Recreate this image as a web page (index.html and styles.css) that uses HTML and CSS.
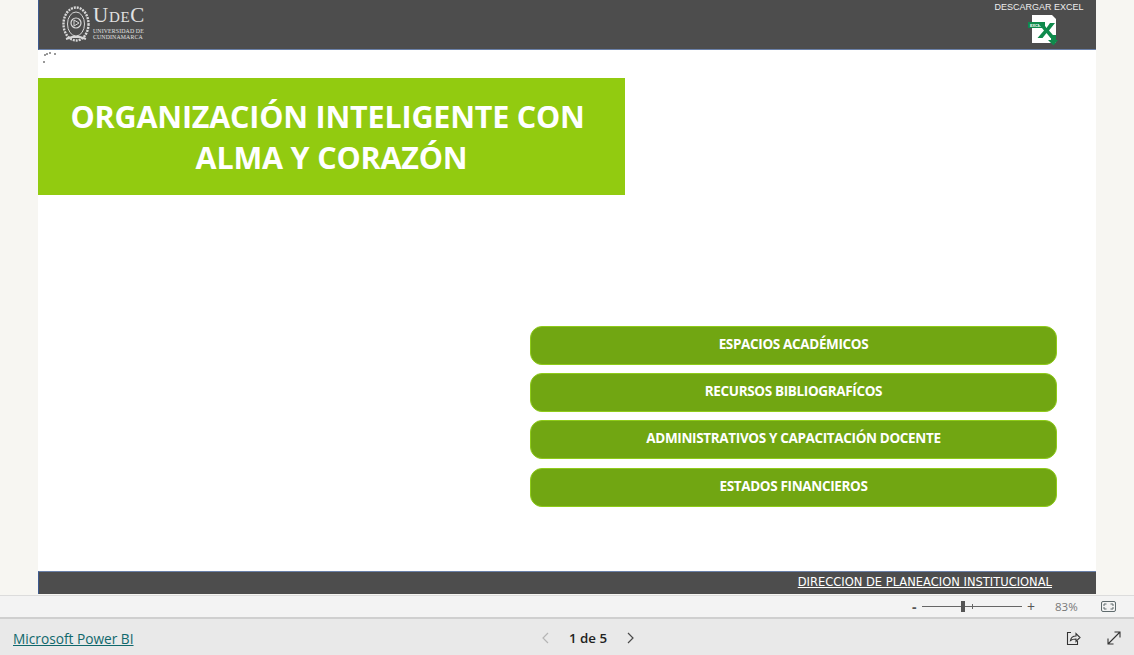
FILE: index.html
```html
<!DOCTYPE html>
<html lang="es">
<head>
<meta charset="utf-8">
<title>UDEC</title>
<link rel="stylesheet" href="styles.css">
</head>
<body>
<div class="stage">
  <main class="report">
    <header class="topbar">
      <div class="brand">
        <svg class="seal" width="28" height="38" viewBox="0 0 28 38" fill="none" stroke="#d8d8d8">
          <ellipse cx="14" cy="19" rx="12.5" ry="16.5" stroke-width="2.4" stroke-dasharray="2 1"/>
          <ellipse cx="14" cy="19" rx="8.5" ry="12" stroke-width="1"/>
          <circle cx="14" cy="18" r="5" stroke-width="1.2"/>
          <path d="M12 15l5 3-5 3z" stroke-width="1"/>
          <path d="M4 34l6-2h8l6 2" stroke-width="2"/>
        </svg>
        <div class="wordmark">
          <div class="udec"><span class="big">U</span>DE<span class="big">C</span></div>
          <div class="uni">UNIVERSIDAD DE</div>
          <div class="uni">CUNDINAMARCA</div>
        </div>
      </div>
      <div class="download">
        <div class="download-label">DESCARGAR EXCEL</div>
        <svg class="excel" width="30" height="31" viewBox="0 0 30 31">
          <path d="M4 0h20l4 4v24H4z" fill="#fff"/>
          <path d="M0 7h17v6H0z" fill="#0f8a4c"/>
          <text class="excel-tag" x="2" y="11.500">EXCEL</text>
          <path d="M10 8h5l3.500 5 3.500-5h5l-6 7.500 6.500 7.500h-5l-4-5-4 5h-5l6.500-7.500z" fill="#0f8a4c"/>
          <path d="M23 20h5v5h2l-4.500 5.500-5.500-5.500h3z" fill="#0f8a4c"/>
        </svg>
      </div>
    </header>
    <section class="content">
      <div class="spinner" aria-hidden="true">
        <i class="dot d1"></i><i class="dot d2"></i><i class="dot d3"></i><i class="dot d4"></i><i class="dot d5"></i>
      </div>
      <h1 class="banner"><span>ORGANIZACIÓN INTELIGENTE CON&nbsp;<br>ALMA Y CORAZÓN</span></h1>
      <nav class="menu">
        <a class="menu-btn">ESPACIOS ACADÉMICOS</a>
        <a class="menu-btn">RECURSOS BIBLIOGRAFÍCOS</a>
        <a class="menu-btn">ADMINISTRATIVOS Y CAPACITACIÓN DOCENTE</a>
        <a class="menu-btn">ESTADOS FINANCIEROS</a>
      </nav>
    </section>
    <footer class="report-foot"><a class="foot-link">DIRECCION DE PLANEACION INSTITUCIONAL</a></footer>
  </main>
</div>
<div class="zoombar">
  <span class="zoom-sign minus">-</span>
  <div class="slider"><span class="tick"></span><span class="thumb"></span></div>
  <span class="zoom-sign plus">+</span>
  <span class="pct">83%</span>
  <svg class="fit" width="15" height="11" viewBox="0 0 15 11" fill="none">
    <rect x="0.5" y="0.500" width="14" height="10" rx="1.500" stroke="#5f6b6d"/>
    <path d="M3 5V3h2.500M12 5V3H9.500M3 6v2h2.500M12 6v2H9.500" stroke="#5f6b6d"/>
  </svg>
</div>
<div class="bottombar">
  <a class="pbi">Microsoft Power BI</a>
  <div class="pager">
    <svg width="9" height="12" viewBox="0 0 9 12" fill="none"><path d="M7 1L2 6l5 5" stroke="#b5b5b5" stroke-width="1.200"/></svg>
    <span class="page-text">1 de 5</span>
    <svg width="9" height="12" viewBox="0 0 9 12" fill="none"><path d="M2 1l5 5-5 5" stroke="#4a4a4a" stroke-width="1.200"/></svg>
  </div>
  <div class="actions">
    <svg width="15" height="15" viewBox="0 0 15 15" fill="none" stroke="#333" stroke-width="1.100">
      <path d="M5 1.500H1.500v12h10V10"/>
      <path d="M4.500 9.500c.5-3 3-4.500 5.500-4.500V2.500l4 4-4 4V8c-2 0-4 .3-5.500 1.500z"/>
    </svg>
    <svg width="14" height="14" viewBox="0 0 14 14" fill="none" stroke="#333" stroke-width="1.100">
      <path d="M1 13L13 1M7.500 1H13v5.500M1 7.500V13h5.500"/>
    </svg>
  </div>
</div>
</body>
</html>
```
FILE: styles.css
```css
* { box-sizing: border-box; }
html, body { margin: 0; height: 100%; overflow: hidden; }
body {
  width: 1134px;
  height: 655px;
  background: #f7f6f2;
  font-family: "Open Sans", "Noto Sans", "Liberation Sans", sans-serif;
  display: flex;
  flex-direction: column;
}
.stage { height: 596px; flex: none; padding: 0 38px 2px; border-bottom: 1px solid #dcdcdc; }
.report {
  width: 1058px;
  height: 594px;
  background: #fff;
  display: flex;
  flex-direction: column;
}
.topbar {
  height: 50px;
  flex: none;
  background: #4d4d4d;
  border-left: 1px solid #3d5a8f;
  border-bottom: 1px solid #6a80a8;
  display: flex;
  justify-content: space-between;
  align-items: flex-start;
}
.brand { display: flex; align-items: center; margin: 5px 0 0 23px; gap: 3px; color: #e2e2e2; }
.wordmark { font-family: "Liberation Serif", serif; margin-top: -4px; }
.udec { font-size: 15px; line-height: 21px; letter-spacing: 0.7px; }
.udec .big { font-size: 21px; }
.uni { font-size: 5.800px; line-height: 6px; letter-spacing: 0.15px; white-space: nowrap; }
.download { width: 88px; margin: 1px 13px 0 0; display: flex; flex-direction: column; align-items: center; }
.download-label { font-size: 9px; line-height: 11px; margin-top: 1px; color: #eee; white-space: nowrap; font-family: "Liberation Sans", sans-serif; }
.excel { margin: 2px 0 0 8px; }
.excel-tag { font-size: 3.800px; font-weight: 700; fill: #fff; font-family: "Liberation Sans", sans-serif; }
.content { flex: 1; min-height: 0; position: relative; }
.spinner { position: absolute; left: 4px; top: 2px; width: 16px; height: 12px; }
.dot { position: absolute; width: 2px; height: 2px; background: #777; border-radius: 50%; }
.d1 { left: 1px; top: 9px; }
.d2 { left: 2px; top: 2px; }
.d3 { left: 4px; top: 1px; }
.d4 { left: 7px; top: 0; }
.d5 { left: 12px; top: 1px; }
.banner {
  margin: 28px 0 0;
  width: 587px;
  height: 117px;
  background: #92cb10;
  color: #fff;
  font-size: 30.500px;
  font-weight: 700;
  line-height: 41px;
  letter-spacing: -0.2px;
  text-align: center;
  white-space: nowrap;
  display: flex;
  align-items: center;
  justify-content: center;
}
.menu {
  margin: 131px 0 0 492px;
  width: 527px;
  display: flex;
  flex-direction: column;
  gap: 8.200px;
}
.menu-btn {
  height: 39px;
  background: #71a612;
  border: 1px solid #8fcb1a;
  border-radius: 12px;
  color: #fff;
  font-size: 13.500px;
  font-weight: 700;
  display: flex;
  align-items: center;
  justify-content: center;
  padding-bottom: 3px;
  letter-spacing: -0.35px;
}
.report-foot {
  height: 23px;
  flex: none;
  background: #4d4d4d;
  border-left: 1px solid #3d5a8f;
  border-top: 1px solid #6a80a8;
  display: flex;
  justify-content: flex-end;
  padding: 0 44px 2px 0;
  align-items: center;
}
.foot-link {
  color: #fff;
  font-family: "DejaVu Sans", sans-serif;
  font-size: 11.500px;
  text-decoration: underline;
  white-space: nowrap;
}
.zoombar {
  height: 23px;
  flex: none;
  background: #f3f3f3;
  border-bottom: 2px solid #cfcfcf;
  display: flex;
  align-items: center;
  padding-left: 912px;
  color: #555;
}
.zoom-sign { font-size: 14px; line-height: 20px; width: 10px; }
.minus { font-weight: 700; width: 10px; }
.slider { position: relative; width: 100px; height: 1px; background: #666; }
.thumb { position: absolute; left: 39px; top: -5px; width: 4px; height: 11px; background: #555; }
.tick { position: absolute; left: 50px; top: -2px; width: 1px; height: 5px; background: #666; }
.plus { margin-left: 5px; width: 28px; }
.pct { font-size: 11.500px; width: 46px; color: #777; }
.bottombar {
  flex: 1;
  background: #e9e9e9;
  display: grid;
  grid-template-columns: 1fr auto 1fr;
  align-items: center;
  padding: 2px 13px 0 13px;
}
.pbi { font-size: 13.700px; color: #10686c; text-decoration: underline; white-space: nowrap; }
.pager { display: flex; align-items: center; gap: 19px; margin-left: 42px; }
.page-text { font-size: 13.300px; font-weight: 600; color: #222; }
.actions { display: flex; justify-content: flex-end; gap: 26px; align-items: center; }
```
